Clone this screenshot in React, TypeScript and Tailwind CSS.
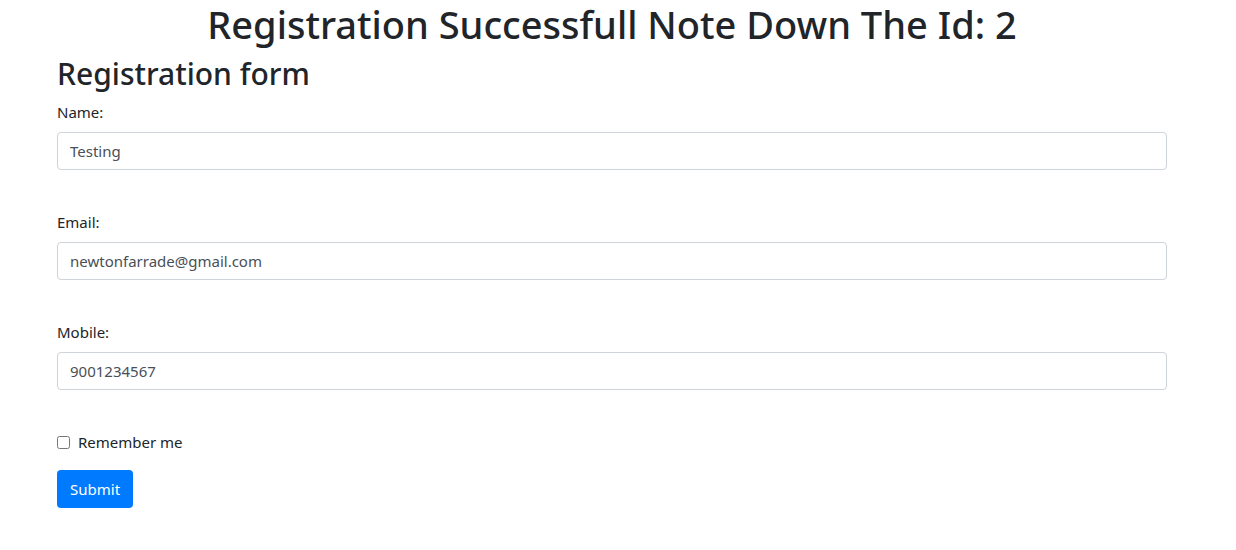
export default function App() {
  return (
    <div className="min-h-screen bg-white text-[#212529] font-['Noto_Sans',sans-serif]">
      <div className="ml-[57px] w-[1110px]">
        <h1 className="text-center text-[38px] leading-[48px] font-medium mb-2">
          Registration Successfull Note Down The Id: 2
        </h1>
        <h2 className="text-[30px] leading-[36px] font-medium mb-2">Registration form</h2>
        <form onSubmit={(e) => e.preventDefault()}>
          <div className="mb-4">
            <label className="block text-[15px] leading-6 mb-2">Name:</label>
            <input
              defaultValue="Testing"
              className="block w-full h-[38px] px-3 text-[15px] text-[#495057] border border-[#ced4da] rounded"
            />
          </div>
          <br />
          <div className="mb-4">
            <label className="block text-[15px] leading-6 mb-2">Email:</label>
            <input
              defaultValue="newtonfarrade@gmail.com"
              className="block w-full h-[38px] px-3 text-[15px] text-[#495057] border border-[#ced4da] rounded"
            />
          </div>
          <br />
          <div className="mb-4">
            <label className="block text-[15px] leading-6 mb-2">Mobile:</label>
            <input
              defaultValue="9001234567"
              className="block w-full h-[38px] px-3 text-[15px] text-[#495057] border border-[#ced4da] rounded"
            />
          </div>
          <br />
          <div className="mb-4 flex items-center h-6">
            <input type="checkbox" className="w-[13px] h-[13px] mr-2" />
            <label className="text-[15px] leading-6">Remember me</label>
          </div>
          <button className="h-[38px] px-[13px] bg-[#007bff] text-white text-[15px] rounded">Submit</button>
        </form>
      </div>
    </div>
  );
}
